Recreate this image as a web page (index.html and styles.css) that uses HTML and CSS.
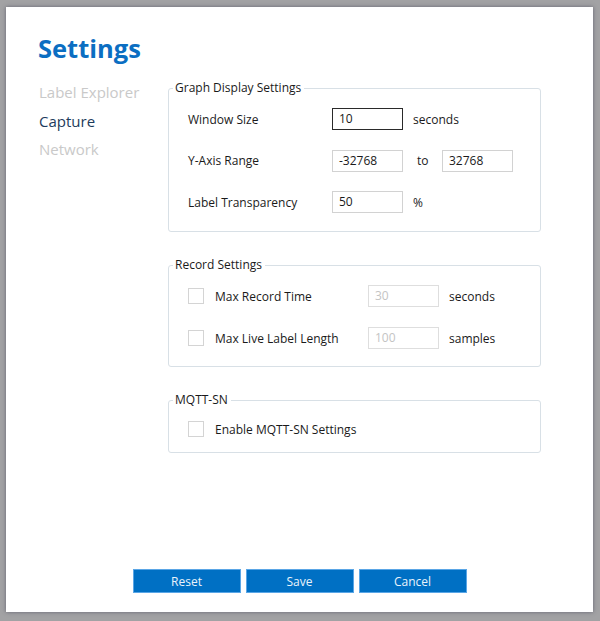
FILE: index.html
```html
<!DOCTYPE html>
<html>
<head>
<meta charset="utf-8">
<link rel="stylesheet" href="styles.css">
</head>
<body>
<div class="window">
  <h1 class="title">Settings</h1>
  <div class="main">
    <nav class="nav">
      <div class="nav-item muted">Label Explorer</div>
      <div class="nav-item active">Capture</div>
      <div class="nav-item muted">Network</div>
    </nav>
    <div class="content">
      <fieldset class="group group-graph">
        <legend>Graph Display Settings</legend>
        <div class="row">
          <span class="label">Window Size</span>
          <span class="input focused">10</span>
          <span class="unit">seconds</span>
        </div>
        <div class="row">
          <span class="label">Y-Axis Range</span>
          <span class="input">-32768</span>
          <span class="to">to</span>
          <span class="input">32768</span>
        </div>
        <div class="row">
          <span class="label">Label Transparency</span>
          <span class="input">50</span>
          <span class="unit">%</span>
        </div>
      </fieldset>
      <fieldset class="group group-record">
        <legend>Record Settings</legend>
        <div class="row">
          <span class="check"></span>
          <span class="clabel">Max Record Time</span>
          <span class="input disabled">30</span>
          <span class="unit">seconds</span>
        </div>
        <div class="row">
          <span class="check"></span>
          <span class="clabel">Max Live Label Length</span>
          <span class="input disabled">100</span>
          <span class="unit">samples</span>
        </div>
      </fieldset>
      <fieldset class="group group-mqtt">
        <legend>MQTT-SN</legend>
        <div class="row">
          <span class="check"></span>
          <span class="clabel">Enable MQTT-SN Settings</span>
        </div>
      </fieldset>
    </div>
  </div>
  <div class="buttons">
    <button class="btn">Reset</button>
    <button class="btn">Save</button>
    <button class="btn">Cancel</button>
  </div>
</div>
</body>
</html>
```
FILE: styles.css
```css
html, body {
  margin: 0;
  padding: 0;
}
body {
  background: #a2a2a4;
  width: 600px;
  height: 621px;
  overflow: hidden;
  font-family: "Open Sans", "Noto Sans", sans-serif;
  color: #1a1a1a;
}
.window {
  margin: 7px 0 0 6px;
  width: 587px;
  height: 605px;
  background: #ffffff;
  box-shadow: 0 0 4px rgba(60, 60, 80, 0.6);
  box-sizing: border-box;
  padding: 26px 0 0 32px;
  display: flex;
  flex-direction: column;
}
.title {
  margin: 0;
  font-size: 25.5px;
  font-weight: 700;
  line-height: 30px;
  color: #0b6ec2;
}
.main {
  display: flex;
  margin-top: 17px;
}
.nav {
  width: 129px;
  display: flex;
  flex-direction: column;
  padding-left: 1px;
  margin-top: -2px;
}
.nav-item {
  font-size: 15px;
  line-height: 28.5px;
  height: 28.5px;
}
.nav-item.muted { color: #c9c9c9; }
.nav-item.active { color: #1d3b5c; }
.content {
  width: 373px;
  display: flex;
  flex-direction: column;
  gap: 25px;
}
.group {
  margin: 0;
  border: 1px solid #d8e0e6;
  border-radius: 3px;
  padding: 0 0 0 19px;
  min-width: 0;
}
.group legend {
  font-size: 12px;
  padding: 0 3px 0 2px;
  margin-left: -15px;
  line-height: 16px;
  color: #1a1a1a;
}
.group-graph {
  display: flex;
  flex-direction: column;
  gap: 19.5px;
  padding-top: 12px;
  padding-bottom: 18px;
}
.group-record {
  display: flex;
  flex-direction: column;
  gap: 20px;
  padding-top: 12px;
  padding-bottom: 17px;
}
.group-mqtt {
  padding-top: 10px;
  padding-bottom: 12px;
}
.row {
  display: flex;
  align-items: center;
  height: 22px;
  font-size: 12px;
}
.label {
  width: 144px;
}
.input {
  box-sizing: border-box;
  width: 71px;
  height: 22px;
  border: 1px solid #d2d2d2;
  padding: 0 6px;
  line-height: 20px;
  font-size: 12px;
  color: #1a1a1a;
}
.input.focused {
  border: 1.5px solid #2a2a2a;
  line-height: 19px;
}
.input.disabled {
  color: #c4c4c4;
  border-color: #dedede;
}
.unit {
  margin-left: 10px;
}
.to {
  width: 39px;
  box-sizing: border-box;
  padding-left: 14px;
}
.check {
  box-sizing: border-box;
  width: 16px;
  height: 16px;
  border: 1px solid #d4d4d4;
  background: #fff;
}
.clabel {
  margin-left: 11px;
  width: 153px;
}
.buttons {
  margin-top: auto;
  margin-bottom: 19px;
  display: flex;
  justify-content: center;
  gap: 5px;
  padding-right: 32px;
}
.btn {
  width: 108px;
  height: 24px;
  background: #0070c4;
  border: 1px solid #5aa6e6;
  color: #eaf3fb;
  font-family: "Open Sans", "Noto Sans", sans-serif;
  font-size: 12px;
  padding: 0;
}
```
